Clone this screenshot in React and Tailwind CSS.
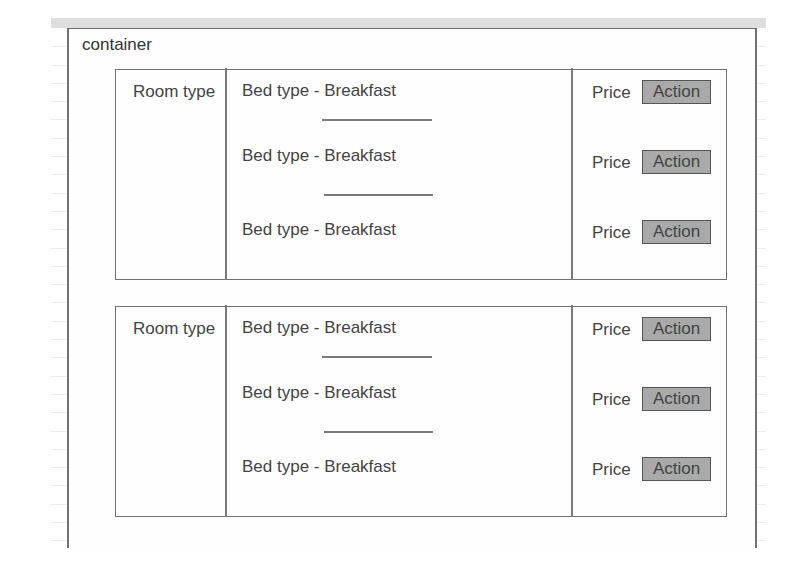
const font = { fontFamily: '"Liberation Sans", Arial, sans-serif' };

function Gutter({ className }) {
  return (
    <div className={`h-full pt-[1px] shrink-0 ${className}`}>
      <div className="h-full bg-[repeating-linear-gradient(to_bottom,transparent_0,transparent_17.3px,#ebebeb_17.3px,#ebebeb_18.3px)]" />
    </div>
  );
}

function Divider() {
  return <div className="w-[2px] bg-[#7a7a7a] -mt-[2px] -mb-[1px] shrink-0" />;
}

function BedRow({ children }) {
  return <div className="h-[20px] leading-[20px]">{children}</div>;
}

function PriceRow({ className }) {
  return (
    <div className={`flex items-center h-[24px] ${className}`}>
      <span className="w-[50px] leading-[20px] pt-[2px]">Price</span>
      <div className="w-[69px] h-[24px] bg-[#a9a9a9] border border-[#555] flex items-center justify-center leading-[20px] pb-[1px]">
        Action
      </div>
    </div>
  );
}

function RoomCard({ className }) {
  return (
    <div className={`ml-[46px] w-[612px] h-[211px] border border-[#707070] flex ${className}`}>
      <div className="w-[109px] shrink-0 pl-[17px] pt-[12px] leading-[20px]">Room type</div>
      <Divider />
      <div className="w-[344px] shrink-0 pl-[15px] pt-[11px] flex flex-col">
        <BedRow>Bed type - Breakfast</BedRow>
        <div className="ml-[80px] mt-[18px] w-[110px] h-[2px] bg-[#7a7a7a]" />
        <div className="mt-[25px]">
          <BedRow>Bed type - Breakfast</BedRow>
        </div>
        <div className="ml-[82px] mt-[28px] w-[109px] h-[2px] bg-[#7a7a7a]" />
        <div className="mt-[24px]">
          <BedRow>Bed type - Breakfast</BedRow>
        </div>
      </div>
      <Divider />
      <div className="flex-1 pl-[19px] pt-[10px] flex flex-col">
        <PriceRow />
        <PriceRow className="mt-[46px]" />
        <PriceRow className="mt-[46px]" />
      </div>
    </div>
  );
}

export default function App() {
  return (
    <div className="w-[805px] h-[587px] bg-white overflow-hidden text-[17px] text-[#444]" style={font}>
      <div className="ml-[51px] pt-[18px] w-[715px]">
        <div className="h-[10px] bg-[#dedede]" />
        <div className="flex h-[520px]">
          <Gutter className="w-[16px]" />
          <div className="w-[690px] shrink-0 border-t border-l-2 border-r-2 border-[#707070] bg-[#fefefe]">
            <div className="pl-[13px] pt-[6px] leading-[20px] text-[#333]">container</div>
            <RoomCard className="mt-[14px]" />
            <RoomCard className="mt-[26px]" />
          </div>
          <Gutter className="w-[9px]" />
        </div>
      </div>
    </div>
  );
}
